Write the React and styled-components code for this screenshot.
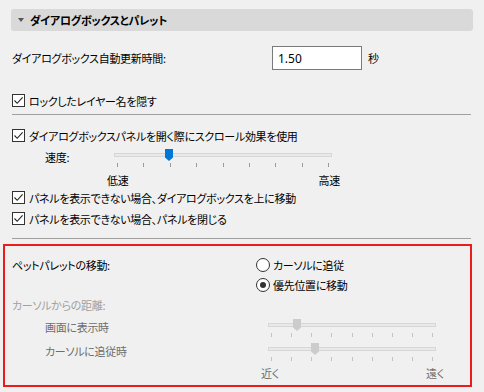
import React from 'react';
import styled, { createGlobalStyle } from 'styled-components';

const GlobalStyle = createGlobalStyle`
    body {
        margin: 0;
        background: #f0f0f0;
        font-family: "Noto Sans CJK JP", "Noto Sans", sans-serif;
        font-size: 11px;
        font-feature-settings: "palt";
        letter-spacing: -0.3px;
        color: #000;
    }
`;

const Check = ({ checked }) => (
    <CheckBox>
        {checked && (
            <svg width="11" height="11" viewBox="0 0 11 11">
                <path d="M1.5 5.5L4.2 8.3L9.6 2.4" fill="none" stroke="#222" strokeWidth="1.1" />
            </svg>
        )}
    </CheckBox>
);

const Radio = ({ checked }) => <RadioDot $checked={checked} />;

const Thumb = ({ disabled }) => (
    <svg width="8" height="12" viewBox="0 0 8 12">
        <path d="M0 0H8V8.5L4 12L0 8.5Z" fill={disabled ? '#cccccc' : '#0078d7'} />
    </svg>
);

const Slider = ({ width, value, ticks = 9, disabled }) => (
    <SliderBox $width={width}>
        <Track $disabled={disabled}>
            <ThumbWrap style={{ left: Math.round(value * (width - 8)) }}>
                <Thumb disabled={disabled} />
            </ThumbWrap>
        </Track>
        <Ticks>
            {Array.from({ length: ticks }).map((_, i) => (
                <Tick key={i} $disabled={disabled} />
            ))}
        </Ticks>
    </SliderBox>
);

const CheckRow = ({ children, checked = true }) => (
    <Row>
        <Check checked={checked} />
        <span>{children}</span>
    </Row>
);

const App = () => {
    return (
        <Page>
            <GlobalStyle />
            <Header>
                <Caret />
                ダイアログボックスとパレット
            </Header>

            <Section>
                <TimeRow>
                    <span>ダイアログボックス自動更新時間:</span>
                    <NumberInput>1.50</NumberInput>
                    <Unit>秒</Unit>
                </TimeRow>

                <FirstCheck>
                    <CheckRow>ロックしたレイヤー名を隠す</CheckRow>
                </FirstCheck>
            </Section>

            <Separator />

            <Section>
                <ScrollCheck>
                    <CheckRow>ダイアログボックスパネルを開く際にスクロール効果を使用</CheckRow>
                </ScrollCheck>

                <SpeedBlock>
                    <SliderLabel>速度:</SliderLabel>
                    <SliderColumn $width={218}>
                        <Slider width={218} value={0.24} />
                        <EndLabels>
                            <span>低速</span>
                            <span>高速</span>
                        </EndLabels>
                    </SliderColumn>
                </SpeedBlock>

                <Stack>
                    <CheckRow>パネルを表示できない場合、ダイアログボックスを上に移動</CheckRow>
                    <CheckRow>パネルを表示できない場合、パネルを閉じる</CheckRow>
                </Stack>
            </Section>

            <Separator $top={9} />

            <Highlight>
                <PetGrid>
                    <span>ペットパレットの移動:</span>
                    <RadioItem>
                        <Radio />
                        <span>カーソルに追従</span>
                    </RadioItem>
                    <span />
                    <RadioItem>
                        <Radio checked />
                        <span>優先位置に移動</span>
                    </RadioItem>
                </PetGrid>

                <Muted>カーソルからの距離:</Muted>

                <DistanceRow>
                    <SliderLabel $disabled>画面に表示時</SliderLabel>
                    <Slider width={168} value={0.15} disabled />
                </DistanceRow>
                <DistanceRow $top={10}>
                    <SliderLabel $disabled>カーソルに追従時</SliderLabel>
                    <SliderColumn $width={168}>
                        <Slider width={168} value={0.26} disabled />
                        <EndLabels $disabled $top={5}>
                            <span>近く</span>
                            <span>遠く</span>
                        </EndLabels>
                    </SliderColumn>
                </DistanceRow>
            </Highlight>
        </Page>
    );
};

export default App;

const Page = styled.div`
    width: 470px;
    padding: 9px 11px 0 3px;
`;

const Header = styled.div`
    margin-left: 8px;
    height: 22px;
    border-radius: 3px;
    background: #d9d9d9;
    display: flex;
    align-items: center;
    padding-left: 7px;
    gap: 6px;
    font-weight: bold;
    font-size: 11px;
`;

const Caret = styled.span`
    width: 0;
    height: 0;
    border-left: 3.5px solid transparent;
    border-right: 3.5px solid transparent;
    border-top: 4px solid #555;
`;

const Section = styled.div`
    margin-left: 9px;
`;

const TimeRow = styled.div`
    margin-top: 15px;
    display: grid;
    grid-template-columns: 260px 90px auto;
    align-items: center;
    height: 24px;
`;

const NumberInput = styled.div`
    box-sizing: border-box;
    height: 24px;
    border: 1px solid #7a7a7a;
    background: #fff;
    padding-left: 5px;
    display: flex;
    align-items: center;
    font-family: "Noto Sans", sans-serif;
    font-size: 12px;
    letter-spacing: 0;
`;

const Unit = styled.span`
    margin-left: 6px;
`;

const FirstCheck = styled.div`
    margin-top: 20px;
`;

const Row = styled.div`
    height: 21px;
    display: flex;
    align-items: center;
    gap: 4px;
`;

const CheckBox = styled.span`
    box-sizing: border-box;
    width: 13px;
    height: 13px;
    border: 1px solid #333;
    background: #fff;
    display: flex;
    align-items: center;
    justify-content: center;
    flex-shrink: 0;
`;

const Separator = styled.div`
    margin: ${p => p.$top || 3}px 2px 0 9px;
    height: 1px;
    background: #a0a0a0;
`;

const ScrollCheck = styled.div`
    margin-top: 10px;
`;

const Stack = styled.div`
    display: flex;
    flex-direction: column;
`;

const SpeedBlock = styled.div`
    margin-top: 7px;
    display: grid;
    grid-template-columns: 102px auto;
`;

const SliderLabel = styled.span`
    padding-left: 33px;
    margin-top: -3px;
    line-height: 14px;
    color: ${p => (p.$disabled ? '#6d6d6d' : '#000')};
`;

const SliderColumn = styled.div`
    width: ${p => p.$width}px;
`;

const SliderBox = styled.div`
    width: ${p => p.$width}px;
`;

const Track = styled.div`
    position: relative;
    box-sizing: border-box;
    height: 4px;
    background: #e7eaea;
    border: 1px solid #d6d6d6;
`;

const ThumbWrap = styled.div`
    position: absolute;
    top: -5px;
    display: flex;
`;

const Ticks = styled.div`
    margin-top: 6px;
    padding: 0 3px;
    display: flex;
    justify-content: space-between;
`;

const Tick = styled.span`
    width: 1px;
    height: 4px;
    background: ${p => (p.$disabled ? '#c4c4c4' : '#9a9a9a')};
`;

const EndLabels = styled.div`
    margin: ${p => p.$top || 6}px -8px 0 -7px;
    line-height: 14px;
    display: flex;
    justify-content: space-between;
    color: ${p => (p.$disabled ? '#6d6d6d' : '#000')};
`;

const Highlight = styled.div`
    margin: 5px 1px 0 0;
    border: 2px solid #ec1c1c;
    padding: 9px 0 5px 7px;
`;

const PetGrid = styled.div`
    display: grid;
    grid-template-columns: 244px auto;
    grid-auto-rows: 20px;
    align-items: center;
`;

const RadioItem = styled.div`
    display: flex;
    align-items: center;
    gap: 3px;
`;

const RadioDot = styled.span`
    box-sizing: border-box;
    width: 14px;
    height: 14px;
    border-radius: 50%;
    border: 1px solid #333;
    background: #fff;
    display: flex;
    align-items: center;
    justify-content: center;
    &::after {
        content: '';
        display: ${p => (p.$checked ? 'block' : 'none')};
        width: 6px;
        height: 6px;
        border-radius: 50%;
        background: #333;
    }
`;

const Muted = styled.div`
    height: 19px;
    display: flex;
    align-items: center;
    color: #a0a0a0;
`;

const DistanceRow = styled.div`
    margin-top: ${p => p.$top || 9}px;
    display: grid;
    grid-template-columns: 256px auto;
`;
